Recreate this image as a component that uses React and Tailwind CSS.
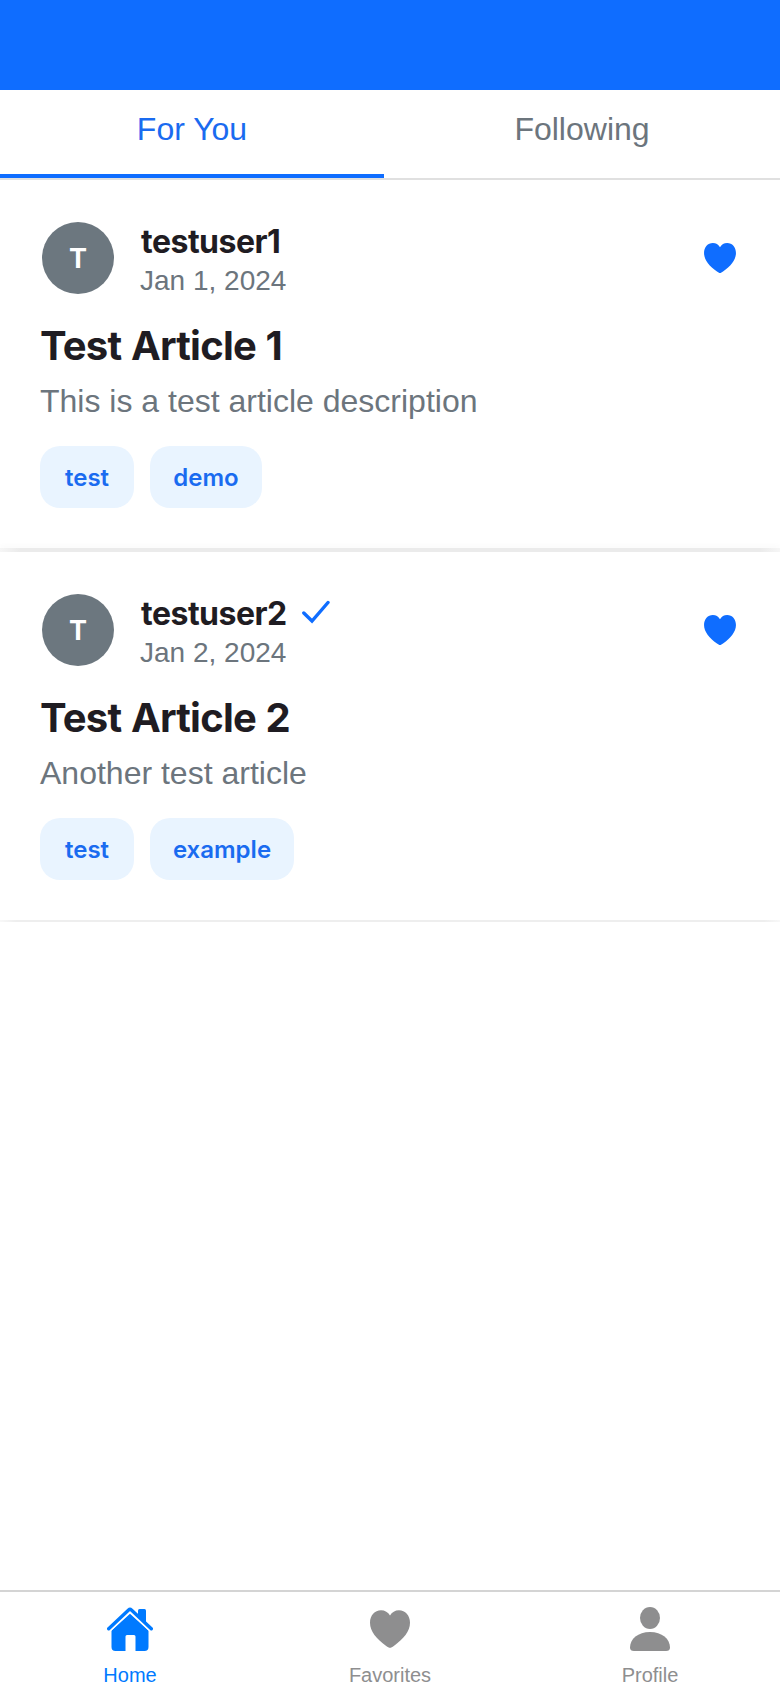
const HEART = "M20 37.6 C19 37.6 17.6 36.7 16.2 35.7 C6.5 29 0 21 0 12.6 C0 5 4.8 0 11 0 C14.8 0 18.2 2 20 5.2 C21.800 2 25.200 0 29 0 C35.200 0 40 5 40 12.600 C40 21 33.500 29 23.800 35.700 C22.400 36.700 21 37.600 20 37.600 Z";

const tagWidths = {
  test: "w-[94px]",
  demo: "w-28",
  example: "w-36",
};

function Heart({ className }) {
  return (
    <svg className={className} viewBox="0 0 40 37.6" fill="currentColor">
      <path d={HEART} />
    </svg>
  );
}

function Tag({ name }) {
  return (
    <span
      className={`flex h-[62px] items-center justify-center rounded-[20px] bg-[#e9f4ff] pt-[2px] font-['Inter',sans-serif] text-2xl font-semibold text-[#1a6bf0] ${tagWidths[name]}`}
    >
      {name}
    </span>
  );
}

function Article({ user, verified, date, title, description, tags }) {
  return (
    <article className="h-[368px] p-10">
      <div className="flex h-[76px] items-center">
        <div className="ml-[2px] flex size-[72px] items-center justify-center rounded-full bg-[#6c777f] pt-[2px] font-['Inter',sans-serif] text-[27px] font-bold text-white">
          T
        </div>
        <div className="mt-[6px] ml-[26px] grow">
          <div className="flex h-10 items-center gap-[15px]">
            <span className="ml-px font-['Inter',sans-serif] text-[32px] leading-10 font-bold tracking-[-0.5px] text-[#1f1c22]">
              {user}
            </span>
            {verified && (
              <svg className="mb-[5px] h-6 w-7" viewBox="0 0 28 24" fill="none" stroke="#0f6dff" strokeWidth="3.400">
                <path d="M1.800 13 L10 21 L26 2.500" strokeLinecap="round" />
              </svg>
            )}
          </div>
          <div className="text-[28px] leading-[38px] text-[#6c757d]">{date}</div>
        </div>
        <Heart className="mr-1 h-[30px] w-8 text-[#0f6dff]" />
      </div>
      <h2 className="mt-6 font-['Inter',sans-serif] text-[40px] leading-[52px] font-bold tracking-[-0.8px] text-[#1f1c22] [word-spacing:1px]">
        {title}
      </h2>
      <p className="mt-[7px] text-[32px] leading-[44px] text-[#6c757d]">{description}</p>
      <div className="mt-[23px] flex gap-4">
        {tags.map((t) => (
          <Tag key={t} name={t} />
        ))}
      </div>
    </article>
  );
}

export default function App() {
  return (
    <div className="flex h-[1688px] w-[780px] flex-col overflow-hidden bg-white font-['Liberation_Sans',sans-serif]">
      <header className="h-[90px] shrink-0 bg-[#0f6dff]" />
      <nav className="flex h-[90px] shrink-0 border-b-2 border-[#e0e0e0] text-[32px]">
        <div className="flex w-[384px] items-center justify-center border-b-4 border-[#0f6dff] pb-[6px] text-[#1a6bf0]">
          For You
        </div>
        <div className="flex grow items-center justify-center pb-[10px] text-[#6c757d]">Following</div>
      </nav>
      <main className="grow">
        <Article
          user="testuser1"
          date="Jan 1, 2024"
          title="Test Article 1"
          description="This is a test article description"
          tags={["test", "demo"]}
        />
        <div className="h-1 bg-[linear-gradient(to_right,#f6f6f6,#ebebeb_20px,#ebebeb_760px,#f6f6f6)] shadow-[0_-3px_4px_rgba(0,0,0,0.02)]" />
        <Article
          user="testuser2"
          verified
          date="Jan 2, 2024"
          title="Test Article 2"
          description="Another test article"
          tags={["test", "example"]}
        />
        <div className="h-[2px] bg-[linear-gradient(to_right,#f8f8f8,#eeeeee_16px,#eeeeee_764px,#f8f8f8)]" />
      </main>
      <footer className="flex h-[98px] shrink-0 border-t-2 border-[#d4d4d4] text-xl text-[#8e8e8f]">
        <div className="flex flex-1 flex-col items-center pt-[15px] text-[#007aff]">
          <svg className="h-11 w-[46px]" viewBox="0 0 46 44" fill="currentColor">
            <path d="M23 6.800 L41.500 23.500 V40 Q41.500 44 37.500 44 H28.500 V29.500 Q28.500 28 27 28 H20 Q18.500 28 18.500 29.500 V44 H8.500 Q4.500 44 4.500 40 V23.500 Z" />
            <path d="M1.600 22 L21.600 3 Q23 1.700 24.400 3 L44.400 22" fill="none" stroke="#fff" strokeWidth="6.400" />
            <path d="M31 9.500 V3.500 Q31 2 32.500 2 H37.500 Q39 2 39 3.500 V17 Z" />
            <path d="M1.700 21.800 L21.600 3 Q23 1.700 24.400 3 L44.300 21.800" fill="none" stroke="currentColor" strokeWidth="3.400" strokeLinecap="round" />
          </svg>
          <span className="mt-3 leading-6">Home</span>
        </div>
        <div className="flex flex-1 flex-col items-center pt-[18px]">
          <Heart className="h-[38px] w-10" />
          <span className="mt-[15px] leading-6">Favorites</span>
        </div>
        <div className="flex flex-1 flex-col items-center pt-[15px]">
          <svg className="h-11 w-10" viewBox="0 0 40 44" fill="currentColor">
            <ellipse cx="20" cy="11" rx="10" ry="11" />
            <path d="M4 44 Q0 44 0 40.500 C0 32 8 25 20 25 C32 25 40 32 40 40.500 Q40 44 36 44 Z" />
          </svg>
          <span className="mt-3 leading-6">Profile</span>
        </div>
      </footer>
    </div>
  );
}
